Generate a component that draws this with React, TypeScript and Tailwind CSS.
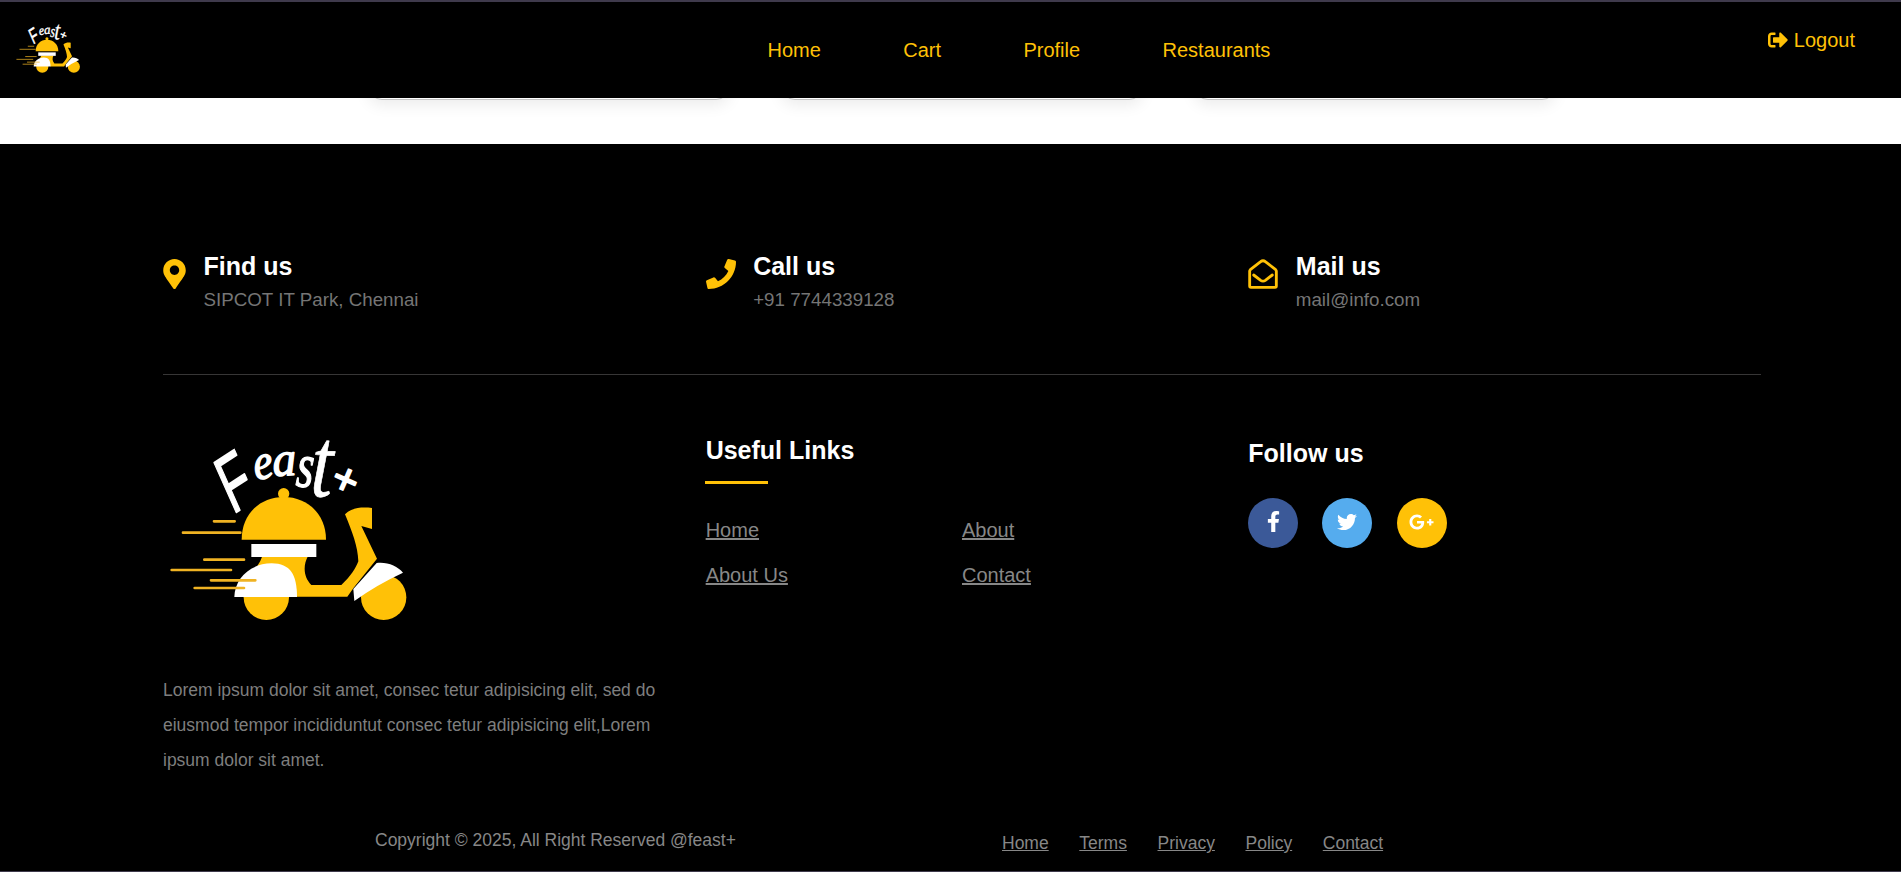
import {
  FaFacebookF,
  FaGooglePlusG,
  FaMapMarkerAlt,
  FaPhone,
  FaSignOutAlt,
  FaTwitter,
} from "react-icons/fa";

const navLinks = ["Home", "Cart", "Profile", "Restaurants"];
const usefulLinks = ["Home", "About", "About Us", "Contact"];
const legalLinks = ["Home", "Terms", "Privacy", "Policy", "Contact"];

function OpenEnvelope() {
  return (
    <svg viewBox="0 0 90 90" className="size-[30px]" fill="none" stroke="currentColor" strokeWidth="8.5" strokeLinejoin="round" strokeLinecap="round">
      <path d="M5 36Q5 34 7 32L38 8Q45 2 52 8L83 32Q85 34 85 36V81Q85 85 81 85H9Q5 85 5 81Z" />
      <path d="M17 48L38 64Q45 69 52 64L73 48" />
    </svg>
  );
}

const contacts = [
  { title: "Find us", detail: "SIPCOT IT Park, Chennai", icon: <FaMapMarkerAlt className="h-[30px] w-[23px]" /> },
  { title: "Call us", detail: "+91 7744339128", icon: <FaPhone className="size-[30px]" /> },
  { title: "Mail us", detail: "mail@info.com", icon: <OpenEnvelope /> },
];

function Logo({ className }: { className: string }) {
  return (
    <svg viewBox="0 0 840 660" overflow="visible" className={className} role="img" aria-label="Feast+">
      <g
        fill="#fff"
        stroke="#fff"
        strokeLinejoin="round"
        strokeLinecap="round"
        fontFamily="'Liberation Serif', serif"
        fontStyle="italic"
      >
        <text transform="translate(248 284) rotate(-24) skewY(-9) scale(.62 1)" fontFamily="'Liberation Sans', sans-serif" fontStyle="normal" fontSize="238" strokeWidth="5">F</text>
        <text transform="translate(317 180) rotate(-10) scale(.88 1)" fontSize="150" strokeWidth="4">e</text>
        <text transform="translate(370 168) rotate(-3) scale(.98 1)" fontSize="145" strokeWidth="4">a</text>
        <text transform="translate(436 198) rotate(5) scale(.7 1)" fontSize="190" strokeWidth="4">s</text>
        <text transform="translate(480 227) rotate(3) scale(.84 1.08)" fontSize="275" strokeWidth="2">t</text>
        <text transform="translate(534 203) rotate(24)" fontFamily="'Liberation Sans', sans-serif" fontStyle="normal" fontSize="132" strokeWidth="5">+</text>
      </g>
      <g fill="#ffc107">
        <circle cx="401" cy="221" r="17" />
        <path d="M275 359C275 282 330 231 401 231S528 282 528 359Z" />
        <path d="M337 408H474C458 438 461 472 484 495H574C601 470 618 444 625 424C624 380 606 334 585 283C606 262 636 261 666 264V327L634 318L681 416L611 503L592 530H440L322 438Q332 424 337 408Z" />
        <circle cx="349" cy="532" r="68" />
        <circle cx="701" cy="532" r="68" />
      </g>
      <g fill="#fff">
        <path d="M304 372H499V411H304Z" />
        <path d="M253 531C254 477 298 431 365 430C421 430 441 465 441 531Z" />
        <path d="M680 429C711 425 743 438 759 458Q677 496 613 543L610 507Z" />
      </g>
      <path
        d="M192 304H254M99 338H271M163 419H282M65 450H243M183 481H316M134 504H282"
        fill="none"
        stroke="#f0b323"
        strokeWidth="8"
        strokeLinecap="round"
      />
    </svg>
  );
}

export default function App() {
  return (
    <div className="flex h-[872px] w-full flex-col overflow-hidden bg-black font-['Liberation_Sans',Arial,sans-serif] text-[20px]">
      <header className="relative z-10 flex h-[98px] shrink-0 border-t-2 border-[#3f3a4c] bg-black text-[#ffc107]">
        <div className="w-[767.5px] pt-[17px] pl-[11px]">
          <Logo className="h-[59.2px] w-[75.3px]" />
        </div>
        <nav className="flex flex-1 items-center gap-[82.4px]">
          {navLinks.map((label) => (
            <a key={label} href="#">{label}</a>
          ))}
        </nav>
        <a href="#" className="mt-[23px] mr-[46px] flex h-[30px] items-center gap-[6px] self-start">
          <FaSignOutAlt className="size-[20px]" />
          Logout
        </a>
      </header>

      <main className="flex h-[46px] shrink-0 gap-[51px] overflow-hidden bg-white pl-[368px]">
        {[0, 1, 2].map((card) => (
          <div
            key={card}
            className="-mt-[40px] h-[42px] w-[362px] shrink-0 rounded-[14px] border border-[#c4c4c4] bg-white shadow-[0_5px_15px_rgba(0,0,0,0.08)]"
          />
        ))}
      </main>

      <footer className="flex-1 border-b border-[#3f3a4c] pt-[104px] pl-[163px] text-[#757575]">
        <div className="w-[1598px]">
          <section className="grid h-[127px] grid-cols-3 gap-[30px] border-b border-[#373636]">
            {contacts.map(({ title, detail, icon }) => (
              <div key={title} className="flex gap-[17.5px]">
                <div className="pt-[11px] text-[#ffc107]">{icon}</div>
                <div>
                  <h4 className="pt-[2px] text-[25px] leading-[32px] font-bold text-white">{title}</h4>
                  <p className="pt-[3px] text-[18.75px] leading-[30px]">{detail}</p>
                </div>
              </div>
            ))}
          </section>

          <section className="grid grid-cols-3 gap-[30px]">
            <div>
              <Logo className="mt-[45px] -ml-[13px] h-[220px] w-[280px]" />
              <p className="mt-[33px] text-[17.5px] leading-[35px] text-[#7e7e7e]">
                Lorem ipsum dolor sit amet, consec tetur adipisicing elit, sed do eiusmod tempor incididuntut consec tetur
                adipisicing elit,Lorem ipsum dolor sit amet.
              </p>
            </div>

            <div className="pt-[60px] text-[#878787]">
              <h3 className="text-[25px] leading-[30px] font-bold text-white">Useful Links</h3>
              <div className="mt-[16px] -ml-px h-[3px] w-[63px] bg-[#ffc107]" />
              <ul className="mt-[24px] grid grid-cols-2">
                {usefulLinks.map((label) => (
                  <li key={label} className="h-[45px] leading-[45px]">
                    <a href="#" className="underline">{label}</a>
                  </li>
                ))}
              </ul>
            </div>

            <div className="pt-[63px]">
              <h3 className="text-[25px] leading-[30px] font-bold text-white">Follow us</h3>
              <div className="mt-[30px] flex gap-[24.2px] text-white">
                <a href="#" aria-label="Facebook" className="flex size-[50px] items-center justify-center rounded-full bg-[#3b5998] pb-[3px]">
                  <FaFacebookF className="size-[21px]" />
                </a>
                <a href="#" aria-label="Twitter" className="-ml-[0.5px] flex size-[50px] items-center justify-center rounded-full bg-[#55acee] pb-[3px]">
                  <FaTwitter className="size-[20px]" />
                </a>
                <a href="#" aria-label="Google Plus" className="ml-[0.5px] flex size-[50px] items-center justify-center rounded-full bg-[#ffc107] pb-[3px]">
                  <FaGooglePlusG className="h-[20px] w-[25px]" />
                </a>
              </div>
            </div>
          </section>

          <section className="mt-[45px] flex pl-[212px] text-[17.5px] leading-[35px] text-[#878787]">
            <p className="w-[627px]">Copyright © 2025, All Right Reserved @feast+</p>
            <ul className="flex gap-[30.6px] pt-[3px]">
              {legalLinks.map((label) => (
                <li key={label}>
                  <a href="#" className="underline">{label}</a>
                </li>
              ))}
            </ul>
          </section>
        </div>
      </footer>
    </div>
  );
}
